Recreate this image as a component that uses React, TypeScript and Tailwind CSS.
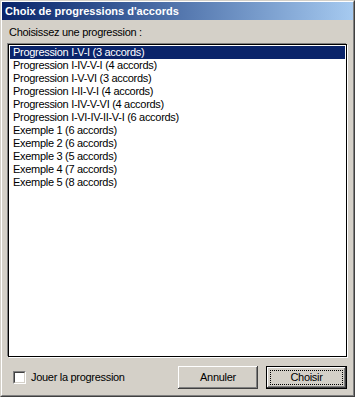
const items = [
  "Progression I-V-I (3 accords)",
  "Progression I-IV-V-I (4 accords)",
  "Progression I-V-VI (3 accords)",
  "Progression I-II-V-I (4 accords)",
  "Progression I-IV-V-VI (4 accords)",
  "Progression I-VI-IV-II-V-I (6 accords)",
  "Exemple 1 (6 accords)",
  "Exemple 2 (6 accords)",
  "Exemple 3 (5 accords)",
  "Exemple 4 (7 accords)",
  "Exemple 5 (8 accords)",
];

const raised =
  "shadow-[inset_-1px_-1px_#404040,inset_1px_1px_#ffffff,inset_-2px_-2px_#808080,inset_2px_2px_#d4d0c8]";

export default function App() {
  return (
    <div className="w-[355px] h-[397px] bg-[#d4d0c8] border border-t-[#d4d0c8] border-l-[#d4d0c8] border-r-[#404040] border-b-[#404040] font-['Liberation_Sans',Arial,sans-serif] text-[11px] text-black">
      <div className="h-full flex flex-col border border-t-white border-l-white border-r-[#808080] border-b-[#808080]">
        {/* barre de titre */}
        <div className="h-[18px] flex items-center pl-[3px] bg-gradient-to-r from-[#0a246a] to-[#a6caf0] text-white font-bold text-[11px]">
          Choix de progressions d'accords
        </div>

        <div className="flex-1 flex flex-col px-[6px] tracking-[-0.3px]">
          <div className="pt-[6px] pl-[1px] leading-[13px]">Choisissez une progression :</div>

          <div className="mt-[5px] h-[313px] bg-white border border-black shadow-[-1px_-1px_#808080,1px_1px_#ffffff] pt-[1px] px-[1px]">
            {items.map((item, i) => (
              <div
                key={item}
                className={
                  "h-[13px] leading-[13px] pl-[3px] whitespace-nowrap " +
                  (i === 0 ? "bg-[#0a246a] text-white" : "")
                }
              >
                {item}
              </div>
            ))}
          </div>

          <div className="flex items-center mt-[9px]">
            <div className="flex items-center gap-[5px] ml-[5px]">
              <div className="w-[13px] h-[13px] bg-white border border-t-[#808080] border-l-[#808080] border-r-white border-b-white">
                <div className="w-full h-full border border-t-[#404040] border-l-[#404040] border-r-[#d4d0c8] border-b-[#d4d0c8]" />
              </div>
              <span className="leading-[13px]">Jouer la progression</span>
            </div>

            <div className="ml-auto flex gap-[8px]">
              <button className={"w-[80px] h-[23px] bg-[#d4d0c8] " + raised}>Annuler</button>
              <button className={"w-[81px] h-[23px] bg-[#d4d0c8] border border-black p-[3px] " + raised}>
                <span className="flex h-full w-full items-center justify-center border border-dotted border-black">
                  Choisir
                </span>
              </button>
            </div>
          </div>
        </div>
      </div>
    </div>
  );
}
